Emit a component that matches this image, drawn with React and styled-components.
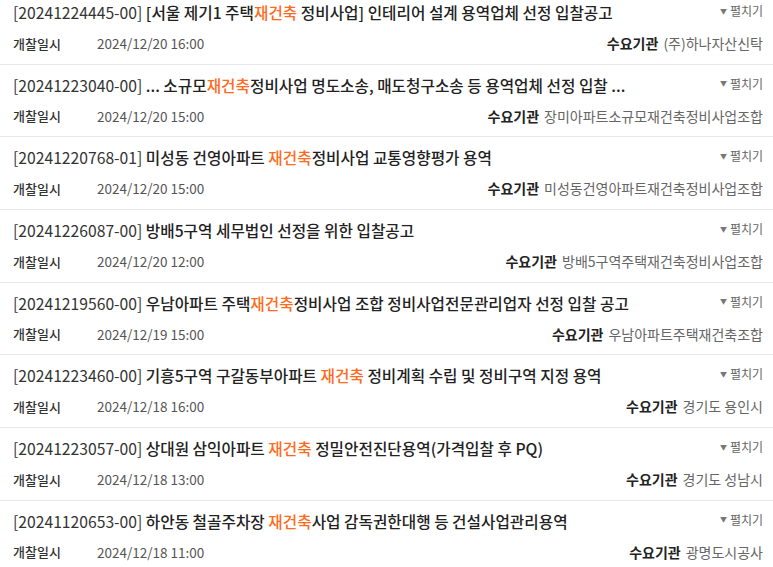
import styled, { createGlobalStyle } from 'styled-components';

const GlobalStyle = createGlobalStyle`
  html, body {
    margin: 0;
    padding: 0;
    background: #fff;
    font-family: "Noto Sans CJK KR", "Noto Sans", sans-serif;
    overflow: hidden;
  }
`;

const items = [
  {
    no: '20241224445-00',
    parts: ['[서울 제기1 주택', '재건축', ' 정비사업] 인테리어 설계 용역업체 선정 입찰공고'],
    date: '2024/12/20 16:00',
    org: '(주)하나자산신탁',
  },
  {
    no: '20241223040-00',
    parts: ['... 소규모', '재건축', '정비사업 명도소송, 매도청구소송 등 용역업체 선정 입찰 ...'],
    date: '2024/12/20 15:00',
    org: '장미아파트소규모재건축정비사업조합',
  },
  {
    no: '20241220768-01',
    parts: ['미성동 건영아파트 ', '재건축', '정비사업 교통영향평가 용역'],
    date: '2024/12/20 15:00',
    org: '미성동건영아파트재건축정비사업조합',
  },
  {
    no: '20241226087-00',
    parts: ['방배5구역 세무법인 선정을 위한 입찰공고'],
    date: '2024/12/20 12:00',
    org: '방배5구역주택재건축정비사업조합',
  },
  {
    no: '20241219560-00',
    parts: ['우남아파트 주택', '재건축', '정비사업 조합 정비사업전문관리업자 선정 입찰 공고'],
    date: '2024/12/19 15:00',
    org: '우남아파트주택재건축조합',
  },
  {
    no: '20241223460-00',
    parts: ['기흥5구역 구갈동부아파트 ', '재건축', ' 정비계획 수립 및 정비구역 지정 용역'],
    date: '2024/12/18 16:00',
    org: '경기도 용인시',
  },
  {
    no: '20241223057-00',
    parts: ['상대원 삼익아파트 ', '재건축', ' 정밀안전진단용역(가격입찰 후 PQ)'],
    date: '2024/12/18 13:00',
    org: '경기도 성남시',
  },
  {
    no: '20241120653-00',
    parts: ['하안동 철골주차장 ', '재건축', '사업 감독권한대행 등 건설사업관리용역'],
    date: '2024/12/18 11:00',
    org: '광명도시공사',
  },
];

function App() {
  return (
    <>
      <GlobalStyle />
      <List>
        {items.map(item => (
          <Row key={item.no}>
            <Head>
              <Title>
                <Code>[{item.no}]</Code>{' '}
                {item.parts.map((p, i) =>
                  p === '재건축' ? <Mark key={i}>{p}</Mark> : <span key={i}>{p}</span>
                )}
              </Title>
              <Toggle>
                <Caret>▼</Caret>펼치기
              </Toggle>
            </Head>
            <Meta>
              <Label>개찰일시</Label>
              <DateText>{item.date}</DateText>
              <Org>
                <OrgLabel>수요기관</OrgLabel>
                <OrgName>{item.org}</OrgName>
              </Org>
            </Meta>
          </Row>
        ))}
      </List>
    </>
  );
}

const List = styled.ul`
  list-style: none;
  margin: -8px 0 0;
  padding: 0;
`;

const Row = styled.li`
  padding: 10px 10px 10.7px 13px;
  border-bottom: 1px solid #e9e9e9;
`;

const Head = styled.div`
  display: flex;
  align-items: center;
  height: 22px;
`;

const Title = styled.div`
  flex: 1;
  min-width: 0;
  font-size: 15.7px;
  line-height: 22px;
  color: #222;
  font-weight: 500;
  white-space: nowrap;
  overflow: hidden;
  text-overflow: ellipsis;
`;

const Code = styled.span`
  font-weight: 400;
  color: #333;
`;

const Mark = styled.span`
  color: #ff6a21;
`;

const Toggle = styled.span`
  display: flex;
  align-items: center;
  gap: 3px;
  font-size: 12px;
  color: #666;
  margin-left: 20px;
  margin-top: -5px;
`;

const Caret = styled.span`
  font-size: 7px;
  color: #777;
`;

const Meta = styled.div`
  display: flex;
  align-items: center;
  height: 20px;
  margin-top: 9px;
  font-size: 13.5px;
`;

const Label = styled.span`
  width: 84px;
  font-size: 13px;
  color: #333;
  font-weight: 500;
`;

const DateText = styled.span`
  color: #555;
`;

const Org = styled.span`
  margin-left: auto;
  display: flex;
  gap: 5px;
  font-size: 14px;
`;

const OrgLabel = styled.span`
  color: #222;
  font-weight: 700;
`;

const OrgName = styled.span`
  color: #666;
`;

export default App;
